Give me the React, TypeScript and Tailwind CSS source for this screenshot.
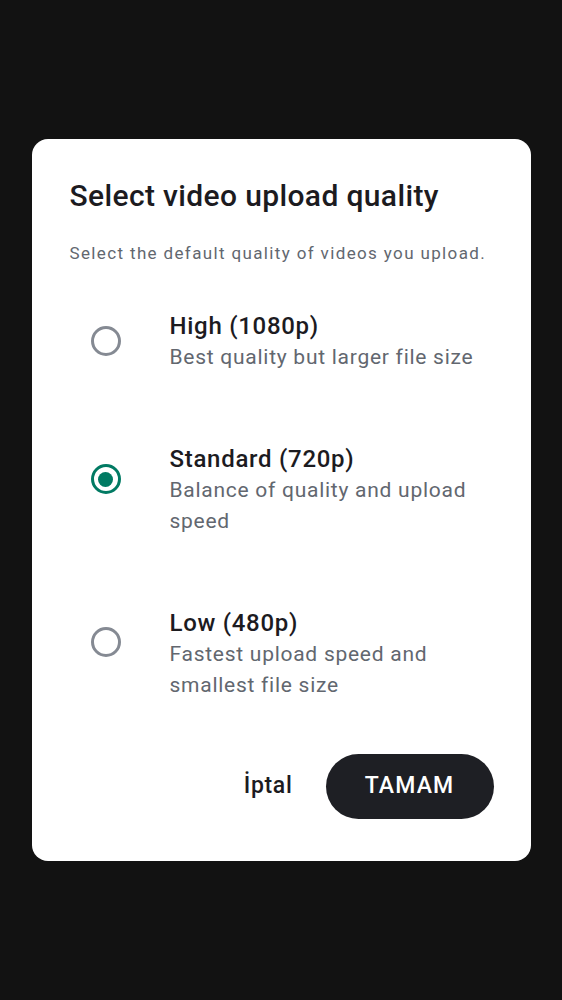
import React, { useState } from "react";

const options = [
  { id: "high", title: "High (1080p)", desc: "Best quality but larger file size", radioPad: "pt-[16px]" },
  { id: "standard", title: "Standard (720p)", desc: "Balance of quality and upload speed", radioPad: "pt-[21px]" },
  { id: "low", title: "Low (480p)", desc: "Fastest upload speed and smallest file size", radioPad: "pt-[20px]" },
];

export default function App() {
  const [selected, setSelected] = useState("standard");

  return (
    <div className="min-h-screen bg-[#121212] flex items-center justify-center font-['Roboto',sans-serif]">
      <div className="w-[499px] bg-white rounded-[16px] pl-[38px] pr-[37px] pt-[39px] pb-[42px]">
        {/* TITLE */}
        <h1 className="text-[30px] leading-[36px] font-medium tracking-[0.012em] text-[#1c1b1f]">
          Select video upload quality
        </h1>
        <p className="mt-[27px] text-[17px] leading-[24px] tracking-[0.08em] text-[#62676f]">
          Select the default quality of videos you upload.
        </p>

        {/* OPTIONS */}
        <div className="mt-[45px] flex flex-col gap-[70px]">
          {options.map((opt) => {
            const active = selected === opt.id;
            return (
              <div
                key={opt.id}
                onClick={() => setSelected(opt.id)}
                className="flex items-start cursor-pointer"
              >
                <div className={`w-[100px] pl-[21px] shrink-0 ${opt.radioPad}`}>
                  <div
                    className={`w-[30px] h-[30px] rounded-full border-[3px] flex items-center justify-center ${
                      active ? "border-[#017a63]" : "border-[#858a93]"
                    }`}
                  >
                    {active && <div className="w-[15px] h-[15px] rounded-full bg-[#017a63]" />}
                  </div>
                </div>
                <div className="flex-1 pr-[20px]">
                  <div className="text-[24px] leading-[32px] font-medium tracking-[0.03em] text-[#1c1b1f]">
                    {opt.title}
                  </div>
                  <div className="text-[21px] leading-[31px] tracking-[0.035em] text-[#62676f]">
                    {opt.desc}
                  </div>
                </div>
              </div>
            );
          })}
        </div>

        {/* ACTIONS */}
        <div className="mt-[53px] flex justify-end items-center gap-[33px]">
          <button className="text-[23px] font-medium text-[#1c1b1f] tracking-[0.03em]">İptal</button>
          <button className="w-[168px] h-[65px] rounded-full bg-[#1e1f24] text-white text-[23px] font-medium tracking-[0.05em]">
            TAMAM
          </button>
        </div>
      </div>
    </div>
  );
}
